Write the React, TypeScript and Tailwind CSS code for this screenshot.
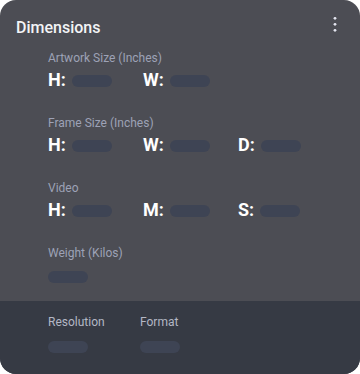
import React from "react";

const sections: { label: string; fields: string[] }[] = [
  { label: "Artwork Size (Inches)", fields: ["H:", "W:"] },
  { label: "Frame Size (Inches)", fields: ["H:", "W:", "D:"] },
  { label: "Video", fields: ["H:", "M:", "S:"] },
];

function Pill() {
  return <span className="block w-10 h-3 rounded-full bg-[#3e4454]" />;
}

function Kebab() {
  return (
    <svg width="6" height="16" viewBox="0 0 6 16">
      <circle cx="3" cy="2.3" r="1.4" fill="#e4e6f0" />
      <circle cx="3" cy="8.3" r="1.4" fill="#e4e6f0" />
      <circle cx="3" cy="14.3" r="1.4" fill="#e4e6f0" />
    </svg>
  );
}

export default function App() {
  return (
    <div
      className="w-[360px] h-[374px] bg-white"
      style={{ fontFamily: "Roboto, 'Liberation Sans', sans-serif" }}
    >
      <div className="w-full h-full rounded-2xl overflow-hidden bg-[#4c4d54] flex flex-col">
        <div className="flex items-start justify-between pl-4 pr-[22px] pt-[16px]">
          <h2 className="text-base leading-6 font-medium text-[#f3f4f6]">Dimensions</h2>
          <Kebab />
        </div>

        <div className="flex-1 pl-12 pt-[10px] flex flex-col gap-[21px]">
          {sections.map((s) => (
            <div key={s.label}>
              <div className="text-xs leading-4 text-[#9da2b6]">{s.label}</div>
              <div className="flex h-7">
                {s.fields.map((f, i) => (
                  <div key={i} className="w-[95px] flex items-center">
                    <span className="text-lg leading-7 font-bold text-white">{f}</span>
                    <span className="ml-[6px] mt-px">
                      <Pill />
                    </span>
                  </div>
                ))}
              </div>
            </div>
          ))}
          <div>
            <div className="text-xs leading-4 text-[#9da2b6]">Weight (Kilos)</div>
            <div className="mt-[10px]">
              <Pill />
            </div>
          </div>
        </div>

        <div className="h-[73px] bg-[#363a44] pl-12 pt-[13px] flex">
          <div className="w-[92px]">
            <div className="text-xs leading-4 text-[#b3b7c5]">Resolution</div>
            <div className="mt-[11px]">
              <Pill />
            </div>
          </div>
          <div className="w-[92px]">
            <div className="text-xs leading-4 text-[#b3b7c5]">Format</div>
            <div className="mt-[11px]">
              <Pill />
            </div>
          </div>
        </div>
      </div>
    </div>
  );
}
